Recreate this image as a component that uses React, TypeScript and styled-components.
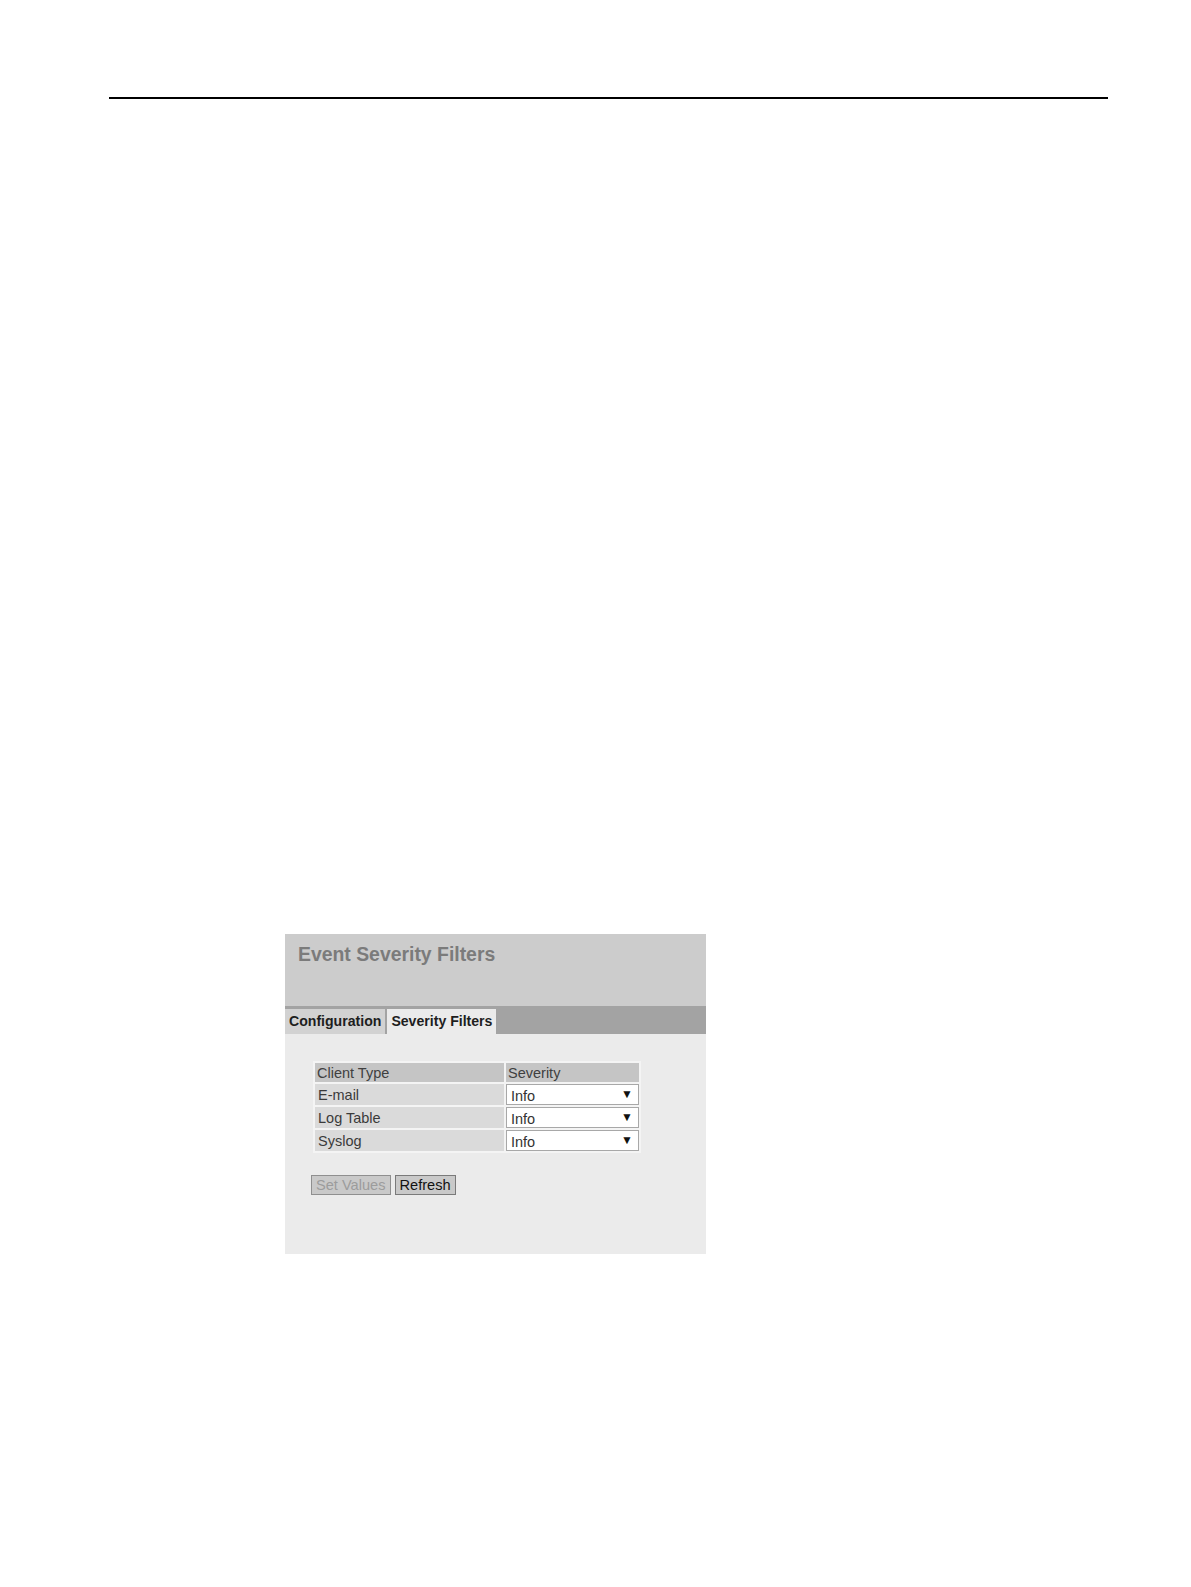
import styled, { createGlobalStyle } from 'styled-components';

const GlobalStyle = createGlobalStyle`
  html, body {
    margin: 0;
    padding: 0;
    background: #ffffff;
  }
  body {
    font-family: 'Liberation Sans', Arial, sans-serif;
  }
`;

const Page = styled.div`
  width: 1191px;
  min-height: 1587px;
  padding: 97px 0 0 109px;
  box-sizing: border-box;
`;

const Rule = styled.div`
  width: 999px;
  height: 2px;
  background: #000;
`;

const Figure = styled.div`
  margin: 835px 0 0 176px;
  width: 421px;
`;

const Header = styled.div`
  height: 72px;
  background: #cccccc;
  padding: 9px 13px 0;
  box-sizing: border-box;
`;

const Title = styled.h1`
  margin: 0;
  font-size: 19.4px;
  font-weight: bold;
  color: #7b7b7b;
`;

const TabBar = styled.div`
  display: flex;
  align-items: flex-end;
  height: 28px;
  padding-top: 3px;
  box-sizing: border-box;
  background: #a3a3a3;
`;

const Tab = styled.div<{ $active?: boolean }>`
  height: 25px;
  line-height: 25px;
  padding: 0 4px;
  margin-right: 2px;
  font-size: 14.1px;
  font-weight: bold;
  color: #1e1e1e;
  background: ${({ $active }) => ($active ? '#ebebeb' : '#d2d2d2')};
`;

const Content = styled.div`
  height: 220px;
  background: #ebebeb;
  padding: 27px 0 0 26px;
  box-sizing: border-box;
`;

const Table = styled.table`
  border-collapse: separate;
  border-spacing: 2px;
  background: #f4f4f4;
  margin-left: 2px;
  font-size: 14.5px;
  color: #3a3a3a;
`;

const HeadCell = styled.th<{ $width: number }>`
  width: ${({ $width }) => $width}px;
  height: 19px;
  padding: 0 2px;
  text-align: left;
  font-weight: normal;
  background: #c5c5c5;
  color: #404040;
`;

const Cell = styled.td`
  height: 21px;
  padding: 0 3px;
  background: #dadada;
`;

const SelectCell = styled.td`
  height: 21px;
  padding: 0;
  background: #f4f4f4;
`;

const SelectWrap = styled.div`
  position: relative;
  width: 133px;
  height: 21px;
`;

const Select = styled.select`
  appearance: none;
  width: 100%;
  height: 100%;
  margin: 0;
  padding: 2px 4px 0;
  border: 1px solid #a8a8a8;
  border-radius: 0;
  background: #ffffff;
  font-family: 'Liberation Sans', Arial, sans-serif;
  font-size: 14.5px;
  color: #333;
`;

const Arrow = styled.span`
  position: absolute;
  right: 6px;
  top: 3px;
  font-size: 12px;
  color: #111;
  pointer-events: none;
`;

const Buttons = styled.div`
  display: flex;
  gap: 4px;
  margin-top: 22px;
`;

const Button = styled.button`
  height: 20px;
  padding: 0 4px;
  border: 1px solid #7a7a7a;
  border-radius: 0;
  background: #c9c9c9;
  font-family: 'Liberation Sans', Arial, sans-serif;
  font-size: 14.6px;
  color: #111;
  &:disabled {
    color: #9c9c9c;
    border-color: #8f8f8f;
  }
`;

const rows = ['E-mail', 'Log Table', 'Syslog'];

export default function App() {
  return (
    <>
      <GlobalStyle />
      <Page>
        <Rule />
        <Figure>
          <Header>
            <Title>Event Severity Filters</Title>
          </Header>
          <TabBar>
            <Tab>Configuration</Tab>
            <Tab $active>Severity Filters</Tab>
          </TabBar>
          <Content>
            <Table>
              <thead>
                <tr>
                  <HeadCell $width={185}>Client Type</HeadCell>
                  <HeadCell $width={129}>Severity</HeadCell>
                </tr>
              </thead>
              <tbody>
                {rows.map((name) => (
                  <tr key={name}>
                    <Cell>{name}</Cell>
                    <SelectCell>
                      <SelectWrap>
                        <Select defaultValue="Info">
                          <option>Info</option>
                          <option>Warning</option>
                          <option>Critical</option>
                        </Select>
                        <Arrow>▼</Arrow>
                      </SelectWrap>
                    </SelectCell>
                  </tr>
                ))}
              </tbody>
            </Table>
            <Buttons>
              <Button disabled>Set Values</Button>
              <Button>Refresh</Button>
            </Buttons>
          </Content>
        </Figure>
      </Page>
    </>
  );
}
